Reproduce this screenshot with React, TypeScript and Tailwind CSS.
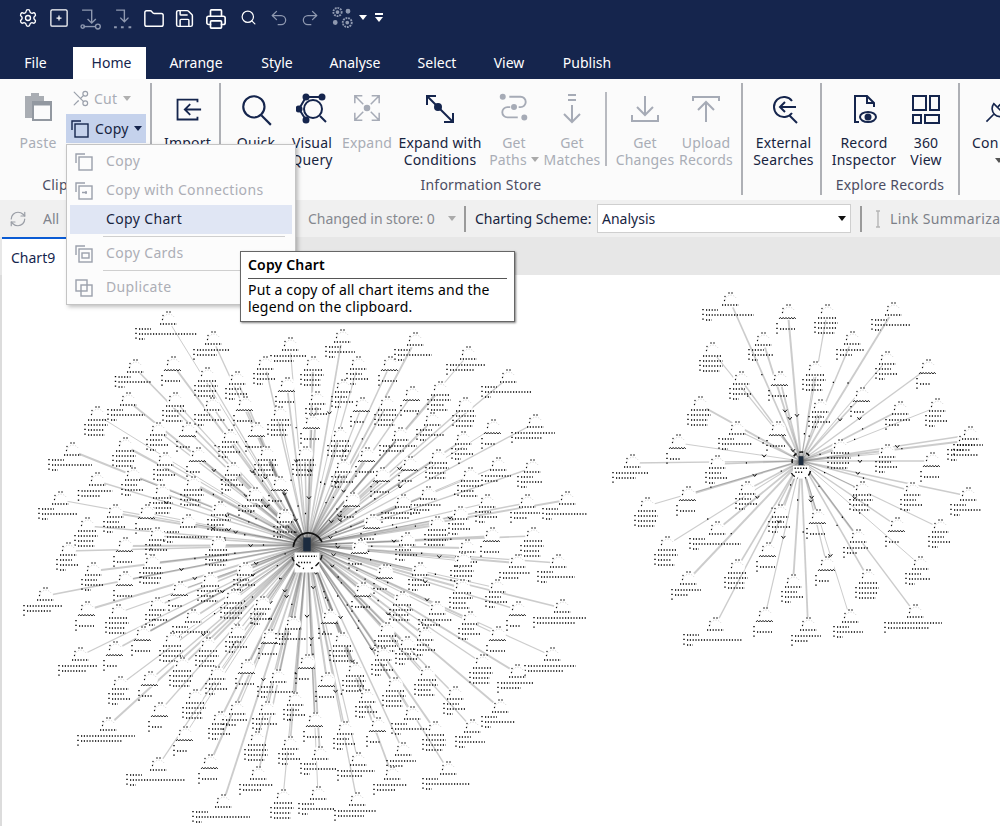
import React from "react";
import { Settings, Folder, Save, Printer, Search, Undo2, Redo2, Scissors, RefreshCw } from "lucide-react";

const FONT = "font-['Noto_Sans','Open_Sans',sans-serif]";

type N = [number, number, number?];

const big: N[] = [
  [168,312,60],[213,332,34],[135,360,35],[173,357],[207,368],[237,372],[128,393,36],[175,393],[212,398,30],[245,397],[97,407],[158,423],[188,423],[125,438],[230,430],[257,423],[72,443,42],[165,453],[198,448],[267,447],[133,468],[97,473,33],[193,477],[233,463],[60,492,38],[162,485],[115,505],[147,505],[220,502],[255,488,28],[188,515,44],[87,518],[157,528],[125,538],[218,537],[68,543],[280,477],[290,338,34],[265,357],[287,378],[280,407],[285,510],
  [342,330,28],[313,357],[358,357],[390,357],[415,333,36],[468,347,38],[508,370,48],[440,382],[343,380],[412,387],[387,397],[317,392],[362,398],[465,398],[432,413,26],[312,415],[340,428],[400,428,36],[493,420],[535,415,42],[463,432],[367,448],[438,450],[343,460],[410,457],[498,458,28],[532,460,24],[382,468],[470,468],[428,487,30],[352,493],[403,495,38],[487,495],[527,495,28],[567,492,44],[460,507],[372,515],[437,517],[407,533],[492,528],[533,528],[467,540],[360,540],[305,447],
  [93,563],[125,572],[152,555],[45,588,38],[180,582],[210,573],[245,563],[87,602],[118,605],[157,598],[193,610,36],[233,590],[262,597],[143,627],[172,633],[80,648,38],[115,642],[208,638],[237,625],[270,630],[293,617,30],[120,677],[150,672],[182,658],[217,667],[247,660],[278,670,36],[108,718,56],[160,703],[195,690],[220,712],[237,702,24],[267,702,24],[295,693],[185,727],[257,732],[290,737],[210,755],[158,758,58],[258,767,32],[223,795,56],[283,790],
  [558,555,36],[517,555,30],[463,553],[420,563],[385,565],[462,580],[497,580],[363,583],[402,592],[437,602,32],[518,602],[562,600,52],[470,612],[498,627],[387,623],[425,628],[330,610],[342,633],[407,637],[552,648,50],[482,655],[517,665,34],[307,655],[355,663],[383,648],[327,673],[427,667],[455,687],[500,700,32],[395,678],[367,690],[315,713],[412,707,36],[345,722],[378,718],[435,722],[472,720,28],[403,743,28],[320,747,34],[358,753,36],[448,762,46],[392,767,32],[318,787,34],[357,793,40],
];

const small: N[] = [
  [678,435],[632,455,34],[717,456],[688,487],[647,498],[747,482],[717,522,50],[667,537],[780,505],[818,510],[862,482],[912,483],[968,488,30],[840,440],[887,445],[932,453],[965,433,30],[940,520],[897,518],[858,530,24],[920,557,24],[768,543],[737,560],[688,572,28],[827,557],[868,570],[793,575],[765,608],[715,618,58],[808,618,28],[850,610,28],[915,605,56],
  [730,293,50],[788,305],[827,305],[852,332,26],[763,333,24],[712,343],[741,372],[780,372],[815,362],[820,400],[862,388],[700,397],[737,422,32],[778,422],[893,303,38],[887,352],[928,360],[900,402,24],[937,399],[970,427,28],
];

const DOT = "1.2 1.6";

function Row({ x, y, w }: { x: number; y: number; w: number }) {
  return <line x1={x} y1={y} x2={x + w} y2={y} stroke="#000" strokeWidth={1.4} strokeDasharray={DOT} />;
}

function Col({ x, y, h }: { x: number; y: number; h: number }) {
  return <line x1={x} y1={y} x2={x} y2={y + h} stroke="#000" strokeWidth={1.4} strokeDasharray="1.2 3.6" />;
}

function Zig({ x, y, w }: { x: number; y: number; w: number }) {
  let d = `M${x} ${y + 1}`;
  for (let i = 1; i <= w / 1.4; i++) d += ` L${x + i * 1.4} ${y + (i % 2 ? -0.6 : 1)}`;
  return <path d={d} fill="none" stroke="#111" strokeWidth={0.9} />;
}

function Node({ n, i }: { n: N; i: number }) {
  const [x, y, wide] = n;
  const kind = wide ? (i % 2 ? 3 : 2) : i % 3;
  const left = wide ? x - wide / 2 - 2 : x - 11;
  return (
    <g>
      <circle cx={x} cy={y + 7} r={8} fill="#fff" />
      <path d={`M${x - 5} ${y + 7} A6 6 0 0 1 ${x + 6} ${y + 5}`} fill="none" stroke="#ccc" strokeWidth={0.8} strokeDasharray="1.2 1.4" />
      <circle cx={x - 1} cy={y} r={0.75} fill="#000" />
      <circle cx={x + 2} cy={y} r={0.75} fill="#000" />
      <circle cx={x - 5} cy={y + 3.5} r={0.7} fill="#111" />
      <circle cx={x - 5.5} cy={y + 7.5} r={0.7} fill="#111" />
      {kind === 0 && (
        <>
          <Zig x={x - 9} y={y + 13} w={18} />
          <Col x={x - 11} y={y + 18} h={13} />
          <Row x={x - 8} y={y + 24} w={10 + (i * 5) % 10} />
        </>
      )}
      {kind === 1 && (
        <>
          <Row x={x - 9} y={y + 13} w={18} />
          <Col x={x - 12} y={y + 17} h={12} />
          <Row x={x - 9} y={y + 18} w={20} />
          <Row x={x - 9} y={y + 23} w={14 + (i * 3) % 7} />
          <Row x={x - 9} y={y + 28} w={17} />
        </>
      )}
      {kind === 2 && (
        <>
          <Row x={x - 8} y={y + 12} w={17} />
          <Col x={left} y={y + 16} h={12} />
          <Row x={left + 3} y={y + 17} w={12} />
          <Row x={left + 3} y={y + 22} w={wide ? wide - 2 : 18} />
          <Row x={left + 3} y={y + 27} w={6} />
        </>
      )}
      {kind === 3 && (
        <>
          <Row x={x - 8} y={y + 12} w={17} />
          <Col x={left} y={y + 17} h={12} />
          <Row x={left + 3} y={y + 18} w={wide ? wide - 2 : 18} />
          <Row x={left + 3} y={y + 23} w={wide ? wide - 14 : 14} />
        </>
      )}
    </g>
  );
}

function Graph({ nodes, cx, cy, scale }: { nodes: N[]; cx: number; cy: number; scale: number }) {
  return (
    <g>
      {nodes.map((n, i) => {
        const tx = n[0];
        const ty = n[1] + 8;
        const sw = 1 + ((i * 13) % 10) / 9;
        return <line key={i} x1={cx} y1={cy} x2={tx} y2={ty} stroke="#555" strokeOpacity={0.3} strokeWidth={sw} />;
      })}
      {nodes.map((n, i) => {
        const t = 0.3 + ((i * 17) % 40) / 100;
        const mx = cx + (n[0] - cx) * t;
        const my = cy + (n[1] + 8 - cy) * t;
        return i % 3 === 0 ? (
          <path key={i} d={`M${mx - 2} ${my - 1} L${mx} ${my + 1.5} L${mx + 2} ${my - 1}`} fill="none" stroke="#111" strokeWidth={1} />
        ) : (
          <Row key={i} x={mx - 1.4} y={my} w={2.8} />
        );
      })}
      {nodes.map((n, i) => (
        <Node key={i} n={n} i={i} />
      ))}
      <rect x={cx - 10 * scale} y={cy + 6 * scale} width={20 * scale} height={16 * scale} fill="#fff" />
      <path d={`M${cx - 11 * scale} ${cy + 2} A${12 * scale} ${12 * scale} 0 0 1 ${cx + 12 * scale} ${cy - 3}`} fill="none" stroke="#111" strokeWidth={1.6} strokeDasharray={scale > 1 ? "none" : "4 3"} />
      <path d={`M${cx - 12 * scale} ${cy + 12} A${14 * scale} ${14 * scale} 0 0 0 ${cx - 3} ${cy + 14 * scale + 6}`} fill="none" stroke="#111" strokeWidth={1.4} strokeDasharray="5 3" />
      <path d={`M${cx + 12 * scale} ${cy + 10} A${14 * scale} ${14 * scale} 0 0 1 ${cx + 4} ${cy + 14 * scale + 6}`} fill="none" stroke="#111" strokeWidth={1.4} strokeDasharray="5 3" />
      <rect x={cx - 3 * scale} y={cy - 6 * scale} width={6 * scale} height={11 * scale} fill="#1c2b3e" />
      <Row x={cx - 8 * scale} y={cy + 9 * scale} w={16 * scale} />
      <Row x={cx - 7 * scale} y={cy + 14 * scale} w={10 * scale} />
    </g>
  );
}

function Chart() {
  return (
    <div className="flex-1 border-l-2 border-[#dcdcdc] bg-white overflow-hidden">
      <svg viewBox="2 275 998 551" className="block w-[998px] h-[551px] blur-[0.25px]">
        <Graph nodes={big} cx={307} cy={545} scale={1.25} />
        <Graph nodes={small} cx={801} cy={461} scale={0.8} />
      </svg>
    </div>
  );
}

function Caret({ className = "" }: { className?: string }) {
  return (
    <svg viewBox="0 0 8 5" className={`w-[8px] h-[5px] ${className}`}>
      <path d="M0 0H8L4 5Z" fill="currentColor" />
    </svg>
  );
}

function I({ children, size = 32, className = "" }: { children: React.ReactNode; size?: number; className?: string }) {
  return (
    <svg viewBox="0 0 32 32" width={size} height={size} fill="none" stroke="currentColor" strokeWidth={2} className={className}>
      {children}
    </svg>
  );
}

function TopIcons() {
  const c = "text-white";
  const d = "text-[#8f99b0]";
  return (
    <div className="h-[47px] flex items-start pt-[8px] pl-[18px] text-white">
      <Settings size={20} strokeWidth={1.6} className={c} />
      <I size={20} className="ml-[11px]">
        <rect x="3" y="3" width="26" height="26" rx="2" />
        <path d="M12 16h8M16 12v8" />
      </I>
      <I size={22} className={`ml-[11px] ${d}`}>
        <path d="M3 3H17V22M11 16l6 6 6-6" />
        <path d="M5 27H22" />
        <circle cx="4" cy="27" r="2.5" />
        <circle cx="26" cy="27" r="3.5" />
      </I>
      <I size={22} className={`ml-[10px] ${d}`}>
        <path d="M6 3H18V20M12 14l6 6 6-6" />
        <path d="M3 28h4M13 28h4M24 28h4" strokeWidth={3} />
      </I>
      <Folder size={22} strokeWidth={1.6} className={`ml-[9px] ${c}`} />
      <Save size={21} strokeWidth={1.7} className={`ml-[9px] ${c}`} />
      <Printer size={22} strokeWidth={1.8} className={`ml-[10px] ${c}`} />
      <Search size={17} strokeWidth={1.7} className={`ml-[13px] mt-[1px] ${c}`} />
      <Undo2 size={20} strokeWidth={1.5} className={`ml-[12px] ${d}`} />
      <Redo2 size={20} strokeWidth={1.5} className={`ml-[11px] ${d}`} />
      <I size={24} className={`ml-[10px] -mt-[2px] ${d}`}>
        <circle cx="10" cy="8" r="5.5" strokeDasharray="2.4 1.2" strokeWidth={2.5} />
        <circle cx="10" cy="8" r="1.5" fill="currentColor" />
        <circle cx="23" cy="22" r="6" strokeDasharray="2.4 1.2" strokeWidth={2.5} />
        <circle cx="23" cy="22" r="1.5" fill="currentColor" />
        <circle cx="24" cy="7" r="2.2" fill="currentColor" />
        <circle cx="7" cy="22" r="2.2" fill="currentColor" />
      </I>
      <Caret className="ml-[5px] mt-[7px]" />
      <div className="ml-[8px] mt-[5px] flex flex-col items-center gap-[2px]">
        <div className="w-[8px] h-[2px] bg-white" />
        <Caret />
      </div>
    </div>
  );
}

function Tabs() {
  const tabs: [string, string][] = [["File", "w-[73px] pr-[2px]"], ["Home", "w-[73px] pl-[4px]"], ["Arrange", "w-[100px]"], ["Style", "w-[62px]"], ["Analyse", "w-[94px]"], ["Select", "w-[70px]"], ["View", "w-[74px]"], ["Publish", "w-[82px]"]];
  return (
    <div className="h-[32px] flex text-[14px]">
      {tabs.map(([t, w]) => (
        <div key={t} className={`${w} flex items-center justify-center pb-[1px] ${t === "Home" ? "bg-white text-[#15254d]" : "text-white"}`}>
          {t}
        </div>
      ))}
    </div>
  );
}

const ON = "text-[#17243f]";
const OFF = "text-[#a9adb6]";

function Btn({ w, ml = 0, off, lines, icon, caret }: { w: string; ml?: number; off?: boolean; lines: string[]; icon: React.ReactNode; caret?: boolean }) {
  return (
    <div className={`${w} flex flex-col items-center shrink-0 ${off ? OFF : ON}`} style={ml ? { marginLeft: ml } : undefined}>
      <div className={`h-[51px] pt-[10px] flex justify-center ${off ? "text-[#a6abb6]" : "text-[#15254d]"}`}>{icon}</div>
      {lines.map((l, i) => (
        <div key={i} className="h-[17px] leading-[17px] whitespace-nowrap flex items-center gap-[4px]">
          {l}
          {caret && i === 1 && <Caret className="w-[6px] h-[4px] text-[#aaa]" />}
        </div>
      ))}
    </div>
  );
}

function Group({ w, label, children, pl = 0 }: { w: string; label?: string; children: React.ReactNode; pl?: number }) {
  return (
    <div className={`${w} h-[112px] shrink-0 border-r-2 border-[#aeb0b5] flex flex-col`}>
      <div className="h-[92px] flex" style={pl ? { paddingLeft: pl } : undefined}>
        {children}
      </div>
      {label && <div className="text-center text-[#4c4d63] leading-[20px]">{label}</div>}
    </div>
  );
}

function CopyIcon({ className = "", inner }: { className?: string; inner?: React.ReactNode }) {
  return (
    <svg viewBox="0 0 20 20" width={20} height={20} fill="none" stroke="currentColor" strokeWidth={1.4} className={className}>
      <path d="M2 11V2H11" />
      <rect x="5" y="5" width="13" height="13" />
      {inner}
    </svg>
  );
}

function Ribbon() {
  return (
    <div className="h-[121px] pt-[4px] bg-[#fbfbfb] flex text-[14px] tracking-[0.2px] overflow-hidden">
      <Group w="w-[152px]" label="Clipboard">
        <div className="w-[66px] pl-[10px] flex">
          <Btn w="w-[56px]" off lines={["Paste"]} icon={
            <svg viewBox="0 0 30 30" width={30} height={30} fill="none" className="-mt-[1px]">
              <path d="M2 4H8V1H16V4H21V26H2Z" fill="#a9adb3" />
              <rect x="10" y="10" width="18" height="18" fill="#fbfbfb" stroke="#9298a0" strokeWidth={2} />
              <path d="M10 12H28" stroke="#9298a0" strokeWidth={3} />
            </svg>
          } />
        </div>
        <div className="flex flex-col">
          <div className={`h-[31px] pl-[5px] flex items-center gap-[4px] ${OFF}`}>
            <Scissors size={19} strokeWidth={1.5} className="text-[#9aa0ab] -scale-x-100" />
            <span>Cut</span>
            <Caret className="w-[6px] h-[4px] text-[#b0b0b0] ml-[2px]" />
          </div>
          <div className={`w-[80px] h-[29px] bg-[#c5d2ec] flex items-center pl-[4px] gap-[5px] ${ON}`}>
            <CopyIcon className="text-[#15254d]" />
            <span>Copy</span>
            <Caret className="w-[7px] h-[4px] text-[#15254d]" />
          </div>
        </div>
      </Group>
      <Group w="w-[69px]">
        <Btn w="w-[71px]" lines={["Import", " "]} icon={
          <I size={29} className="mt-[2px]"><path d="M27 8V5H5V27H27V24" /><path d="M31 16H13M19 10l-6 6 6 6" /></I>
        } />
      </Group>
      <Group w="w-[522px]" label="Information Store" pl={7}>
        <Btn w="w-[56px]" lines={["Quick", " "]} icon={<I size={34}><circle cx="14" cy="13" r="10" /><path d="M21 21l9 9" /></I>} />
        <Btn w="w-[56px]" lines={["Visual", "Query"]} icon={
          <I size={32}>
            <circle cx="17" cy="16" r="9" />
            <path d="M24 23l6 6M10 4H26M10 4L3 16l7 11" />
            <circle cx="10" cy="4" r="2.5" fill="currentColor" />
            <circle cx="26" cy="4" r="2.5" fill="currentColor" />
            <circle cx="3" cy="16" r="2.5" fill="currentColor" />
            <circle cx="10" cy="27" r="2.5" fill="currentColor" />
          </I>
        } />
        <Btn w="w-[54px]" off lines={["Expand"]} icon={
          <I size={30}>
            <path d="M3 11V3H11M3 3l9 9M29 11V3H21M29 3l-9 9M3 21v8h8M3 29l9-9M29 21v8h-8M29 29l-9-9" strokeWidth={1.6} />
            <circle cx="16" cy="16" r="2.5" fill="currentColor" />
          </I>
        } />
        <Btn w="w-[92px]" lines={["Expand with", "Conditions"]} icon={
          <I size={32}>
            <path d="M3 3L29 29M3 12V3H12M29 20V29H20" />
            <circle cx="14" cy="14" r="3" fill="currentColor" />
          </I>
        } />
        <Btn w="w-[56px]" off caret lines={["Get", "Paths"]} icon={
          <I size={30}>
            <path d="M11 4h12a5.5 5.5 0 0 1 0 11h-2M12 15H9a5.5 5.5 0 0 0 0 11h11" />
            <circle cx="4" cy="4" r="2.2" fill="currentColor" />
            <circle cx="16" cy="15" r="2.2" fill="currentColor" />
            <circle cx="27" cy="26" r="2.2" fill="currentColor" />
          </I>
        } />
        <Btn w="w-[60px]" off lines={["Get", "Matches"]} icon={
          <I size={32}><path d="M12 2h8M12 7h8M16 12V29M8 21l8 8 8-8" /></I>
        } />
        <div className="w-[2px] h-[74px] mt-[9px] ml-[3px] bg-[#b8bac0] shrink-0" />
        <Btn w="w-[50px]" ml={13} off lines={["Get", "Changes"]} icon={
          <I size={32}><path d="M16 3V22M8 14l8 8 8-8M3 22v6h26v-6" /></I>
        } />
        <Btn w="w-[52px]" ml={10} off lines={["Upload", "Records"]} icon={
          <I size={32}><path d="M3 8V4H29V8M16 29V9M8 17l8-8 8 8" /></I>
        } />
      </Group>
      <Group w="w-[79px]">
        <Btn w="w-[81px]" lines={["External", "Searches"]} icon={
          <I size={32}><path d="M24 8A10 10 0 1 0 24 20M28 14H12M17 9l-5 5 5 5M21 22l8 8" /></I>
        } />
      </Group>
      <Group w="w-[138px]" label="Explore Records" pl={12}>
        <Btn w="w-[60px]" lines={["Record", "Inspector"]} icon={
          <I size={32}>
            <path d="M7 23V3H19L26 10V14M19 3V10H26M7 23V29H11" />
            <ellipse cx="20" cy="24" rx="8" ry="5" />
            <circle cx="20" cy="24" r="2.5" fill="currentColor" />
          </I>
        } />
        <Btn w="w-[60px]" ml={2} lines={["360", "View"]} icon={
          <I size={32}>
            <rect x="3" y="3" width="13" height="14" />
            <rect x="20" y="3" width="9" height="14" />
            <rect x="3" y="22" width="8" height="8" />
            <rect x="15" y="22" width="14" height="8" />
          </I>
        } />
      </Group>
      <div className={`w-[40px] shrink-0 pl-[12px] overflow-hidden ${ON}`}>
        <div className="h-[51px] pt-[15px] pl-[12px] text-[#15254d]">
          <I size={26}>
            <path d="M12 7L26 21A10 10 0 0 1 12 7Z" />
            <path d="M12 20L3 29M17 11l6-6M22 16l6-6" />
          </I>
        </div>
        <div className="leading-[17px] whitespace-nowrap">Con</div>
        <Caret className="w-[6px] h-[4px] mt-[7px] ml-[23px] text-[#555]" />
      </div>
    </div>
  );
}

function Toolbar() {
  return (
    <div className="h-[37px] bg-[#f0f0f0] flex items-center text-[14px] whitespace-nowrap overflow-hidden">
      <RefreshCw size={18} strokeWidth={1.6} className="ml-[9px] text-[#9a9ea6] shrink-0" />
      <span className="ml-[16px] w-[265px] shrink-0 text-[#7f838c]">All</span>
      <span className="text-[#85888f] w-[134px] shrink-0 tracking-[-0.05px]">Changed in store: 0</span>
      <Caret className="ml-[6px] w-[7px] h-[4px] text-[#aaa] shrink-0" />
      <div className="ml-[8px] w-[2px] h-[26px] bg-[#9a9a9a] shrink-0" />
      <span className="ml-[9px] w-[122px] shrink-0 text-[#17243f]">Charting Scheme:</span>
      <div className="w-[254px] h-[29px] bg-white border border-[#cfcfcf] flex items-center justify-between pl-[4px] pr-[4px] shrink-0 text-[#17243f]">
        <span>Analysis</span>
        <Caret className="w-[7px] h-[4px] text-[#111]" />
      </div>
      <div className="ml-[9px] w-[2px] h-[26px] bg-[#9a9a9a] shrink-0" />
      <svg viewBox="0 0 6 20" width={6} height={20} className="ml-[13px] shrink-0" fill="none" stroke="#b5b5b5" strokeWidth={1.4}>
        <path d="M1 2H5M3 2V18M1 18H5" />
      </svg>
      <span className="ml-[9px] text-[#7c8088] tracking-[0.4px]">Link Summariza</span>
    </div>
  );
}

function TabStrip() {
  return (
    <div className="h-[38px] bg-[#e7e7e7] flex text-[14px]">
      <div className="ml-[2px] w-[64px] bg-white border-t-2 border-[#0a5bd3] pl-[9px] flex items-center text-[#15254d]">Chart9</div>
    </div>
  );
}

function MenuItem({ label, active, icon }: { label: string; active?: boolean; icon?: React.ReactNode }) {
  return (
    <div className={`mx-[3px] h-[29px] flex items-center ${active ? "bg-[#e0e6f4] text-[#17243f]" : "text-[#acaeb6]"}`}>
      <div className="w-[36px] pl-[4px] text-[#9ba0ac]">{icon}</div>
      <span className="pb-[2px]">{label}</span>
    </div>
  );
}

function Sep() {
  return <div className="ml-[36px] mr-[10px] my-[2px] h-px bg-[#cfcfcf]" />;
}

function Menu() {
  return (
    <div className="absolute left-[66px] top-[144px] w-[230px] h-[161px] pt-[2px] bg-[#fcfcfc] border border-[#c4c4c4] shadow-[2px_2px_4px_rgba(0,0,0,0.25)] text-[14px] tracking-[0.35px]">
      <MenuItem label="Copy" icon={<CopyIcon />} />
      <MenuItem label="Copy with Connections" icon={<CopyIcon inner={<path d="M8 11.5H13M12 10v3" />} />} />
      <MenuItem label="Copy Chart" active />
      <Sep />
      <MenuItem label="Copy Cards" icon={<CopyIcon inner={<rect x="8" y="9" width="7" height="5" />} />} />
      <Sep />
      <MenuItem label="Duplicate" icon={
        <svg viewBox="0 0 20 20" width={20} height={20} fill="none" stroke="currentColor" strokeWidth={1.4}>
          <rect x="2" y="2" width="11" height="11" />
          <rect x="7" y="7" width="11" height="11" />
        </svg>
      } />
    </div>
  );
}

function Tip() {
  return (
    <div className="absolute left-[240px] top-[251px] w-[275px] h-[71px] px-[7px] pt-[3px] bg-white border border-[#666] shadow-[1px_1px_2px_rgba(0,0,0,0.5)] text-[14px] text-black leading-[17px] tracking-[0.17px]">
      <div className="font-semibold h-[24px] leading-[20px] border-b border-[#555]">Copy Chart</div>
      <div className="pt-[2px]">Put a copy of all chart items and the</div>
      <div>legend on the clipboard.</div>
    </div>
  );
}

export default function App() {
  return (
    <div className={`relative w-[1000px] h-[826px] flex flex-col overflow-hidden bg-white ${FONT}`}>
      <div className="bg-[#15254d]">
        <TopIcons />
        <Tabs />
      </div>
      <Ribbon />
      <Toolbar />
      <TabStrip />
      <Chart />
      <Menu />
      <Tip />
    </div>
  );
}
